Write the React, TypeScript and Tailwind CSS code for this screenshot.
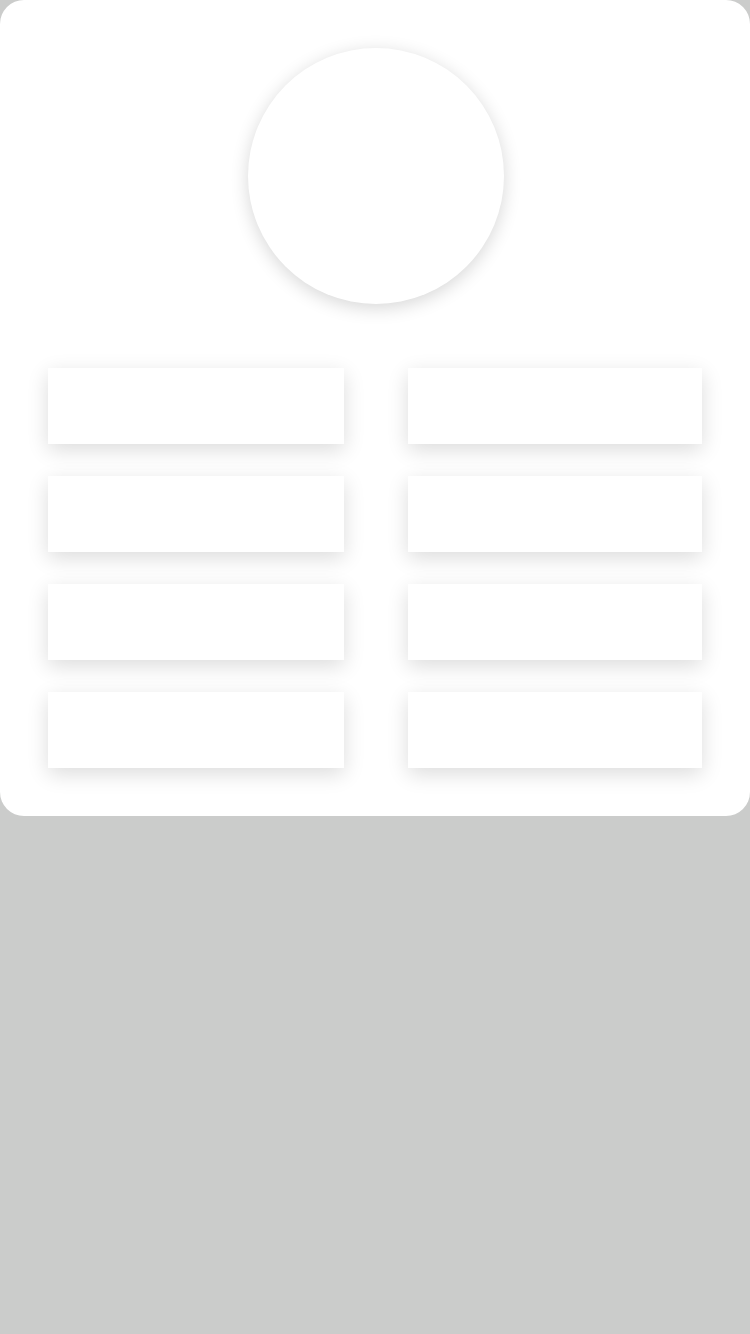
export default function App() {
  const slots = Array.from({ length: 8 });

  return (
    <div className="min-h-[1334px] w-[750px] bg-[#cbcccb]">
      <section className="flex flex-col items-center rounded-[24px] bg-white px-12 pt-12 pb-12">
        <div className="ml-[2px] h-64 w-64 rounded-full bg-white shadow-[0_4px_18px_rgba(0,0,0,0.16)]" />
        <div className="mt-16 grid w-full grid-cols-[296px_294px] gap-x-16 gap-y-8">
          {slots.map((_, i) => (
            <div key={i} className="h-[76px] bg-white shadow-[0_6px_20px_rgba(0,0,0,0.14)]" />
          ))}
        </div>
      </section>
    </div>
  );
}
